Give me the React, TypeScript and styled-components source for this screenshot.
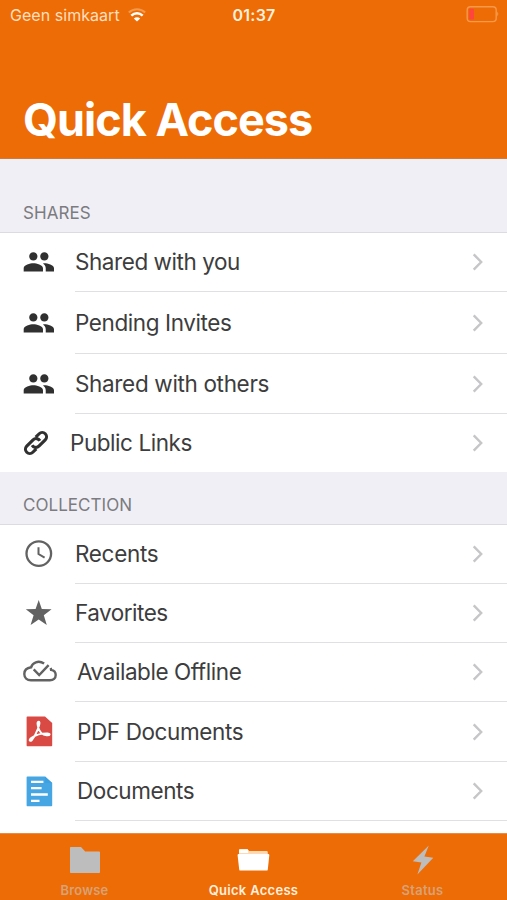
import React from 'react';
import styled, { createGlobalStyle } from 'styled-components';

const Global = createGlobalStyle`
  *{box-sizing:border-box}
  body{margin:0;background:#fff;font-family:Inter,"Liberation Sans",sans-serif;overflow:hidden}
  svg{display:block;flex:none}
`;
const Screen = styled.div`width:507px;height:900px;display:flex;flex-direction:column;overflow:hidden;`;
const Header = styled.header`height:159px;flex:none;background:#ee6c05;border-bottom:1px solid #d27a3c;display:flex;flex-direction:column;justify-content:space-between;`;
const StatusBar = styled.div`height:30px;display:grid;grid-template-columns:1fr auto 1fr;align-items:center;padding:0 8px 0 10px;color:#ffdfbf;font-size:16px;`;
const Carrier = styled.div`display:flex;align-items:center;gap:8px;letter-spacing:.04px;`;
const Clock = styled.div`font-weight:600;letter-spacing:.25px;color:#fff0dc;margin-left:-1px;`;
const Battery = styled.div`justify-self:end;padding-bottom:2px;`;
const Title = styled.h1`margin:0;padding:0 0 10px 23px;font-size:45px;line-height:56px;font-weight:700;color:#fff;letter-spacing:-1px;white-space:nowrap;`;
const SectionHeader = styled.div<{ $h: number }>`height:${p => p.$h}px;flex:none;background:#f0eff5;border-bottom:1px solid #dcdce0;display:flex;align-items:flex-end;padding:0 0 8px 23px;font-size:17px;line-height:22px;color:#7b7b80;letter-spacing:.05px;`;
const Row = styled.div<{ $h: number }>`height:${p => p.$h}px;flex:none;display:flex;background:#fff;padding-left:23px;`;
const IconCell = styled.div<{ $w: number }>`width:${p => p.$w}px;flex:none;display:flex;align-items:center;padding-bottom:1px;`;
const Body = styled.div<{ $line: boolean }>`flex:1;display:flex;align-items:center;justify-content:space-between;padding-right:24px;border-bottom:${p => (p.$line ? '1px solid #e0e0e2' : '0')};`;
const Label = styled.span<{ $ls: number; $indent: number }>`font-size:22.5px;line-height:30px;color:#3d3d3e;letter-spacing:${p => p.$ls}px;padding-left:${p => p.$indent}px;white-space:nowrap;`;
const Spacer = styled.div`flex:1;background:#fff;`;
const Tabs = styled.nav`height:67px;flex:none;background:#ee6c05;border-top:1px solid #e88a48;display:grid;grid-template-columns:repeat(3,1fr);`;
const Tab = styled.div`display:flex;flex-direction:column;align-items:center;`;
const TabIcon = styled.div`height:48px;display:flex;align-items:center;padding-top:3px;`;
const TabLabel = styled.span<{ $ls: number; $dim?: boolean }>`font-size:13px;line-height:17px;font-weight:600;letter-spacing:${p => p.$ls}px;color:${p => (p.$dim ? '#d7a275' : '#fff0df')};`;

const People = () => (
  <svg width="31" height="20" viewBox="0.5 4.8 22.5 14.5" fill="#303030"><path d="M16 11c1.66 0 2.99-1.34 2.99-3S17.66 5 16 5c-1.66 0-3 1.34-3 3s1.34 3 3 3zm-8 0c1.66 0 2.99-1.34 2.99-3S9.66 5 8 5C6.34 5 5 6.34 5 8s1.34 3 3 3zm0 2c-2.33 0-7 1.17-7 3.5V19h14v-2.5c0-2.33-4.67-3.5-7-3.5zm8 0c-.29 0-.62.02-.97.05 1.16.84 1.97 1.97 1.97 3.45V19h6v-2.5c0-2.33-4.67-3.5-7-3.5z" /></svg>
);
const linkHalf = 'M3.9-4.3H8.8A4.3 4.3 0 0 1 8.8 4.3H-.2A4.3 4.3 0 0 1-4.3-1.2';
const Link = () => (
  <svg width="26" height="26" viewBox="-13 -13 26 26" fill="none" stroke="#303030" strokeWidth="3.1">
    <g transform="rotate(-45)"><path d={linkHalf} /><path d={linkHalf} transform="rotate(180)" /></g>
  </svg>
);
const Recent = () => (
  <svg width="32" height="30" viewBox="0 0 32 30" fill="none" stroke="#626262" strokeWidth="2.3"><circle cx="15.8" cy="14.6" r="12.3" /><path d="M15.5 8.3V15L21.6 18.7" strokeWidth="2" /></svg>
);
const Star = () => (
  <svg width="32" height="30" viewBox="0 0 32 30" fill="#626262"><path d="M15.7 2.1l3.1 8.9 9.8.2-7.8 6.1 3 9.6-8.1-5.5-8.1 5.5 3-9.6-7.8-6.1 9.8-.2z" /></svg>
);
const Offline = () => (
  <svg width="34" height="24" viewBox="0 0 34 24" fill="none" stroke="#626262" strokeWidth="2.4"><path d="M21.1 3.6C15.2-.3 9.4 2.9 8.1 7.3 3.7 7.9 1.3 10.6 1.3 14c0 3.8 2.8 6.3 6.6 6.3h19c3.5 0 5.8-2.1 5.8-5.2 0-3.2-1.6-4.7-4.6-5.2-.1-.8-.2-1.3-.5-1.9M10.7 9.3l5.5 5.7L25.6 5.2" /></svg>
);
const Pdf = () => (
  <svg width="32" height="31" viewBox="0 0 32 31"><path d="M3.6 1.3q0-.8.8-.8H22l7.2 6.5v22.5q0 .8-.8.8h-24q-.8 0-.8-.8z" fill="#d94a45" /><path d="M15.8 5.8c-2 0-1.3 2.8-.4 6.2 1.3 4.4 5 6.9 8.2 7.2 3.9.3 3.8-1.8 1-1.8-5.9-.1-12 1.5-16 4.4-3.4 2.5-1.5 4.4.4 2C13.2 18.8 18.3 5.8 15.8 5.8z" fill="none" stroke="#fff" strokeWidth="1.9" /></svg>
);
const Doc = () => (
  <svg width="32" height="31" viewBox="0 0 32 31"><path d="M3.6 1.3q0-.8.8-.8H22l7.2 6.5v22.5q0 .8-.8.8h-24q-.8 0-.8-.8z" fill="#46a6e4" /><path d="M22 .5l7.2 6.5H23q-1 0-1-1z" fill="#3da0e0" /><path d="M8 5.9h12.4M8 12.2h10.6M8 18.5h16.8M8 24.8h8.5" stroke="#fff" strokeWidth="2.3" /></svg>
);
const Chevron = () => (
  <svg width="11" height="18" viewBox="0 0 11 18" fill="none" stroke="#c6c6c9" strokeWidth="2.4"><path d="M1.7 1.3L9.2 9l-7.5 7.7" /></svg>
);

type Item = { icon: React.ReactNode; text: string; h: number; ls: number; indent?: number; iconW?: number };
const shares: Item[] = [
  { icon: <People />, text: 'Shared with you', h: 59, ls: -0.44 },
  { icon: <People />, text: 'Pending Invites', h: 62, ls: -0.41 },
  { icon: <People />, text: 'Shared with others', h: 60, ls: -0.34 },
  { icon: <Link />, text: 'Public Links', h: 58, ls: -0.45, iconW: 47 },
];
const collection: Item[] = [
  { icon: <Recent />, text: 'Recents', h: 59, ls: -0.33 },
  { icon: <Star />, text: 'Favorites', h: 59, ls: -0.5 },
  { icon: <Offline />, text: 'Available Offline', h: 59, ls: -0.43, indent: 2 },
  { icon: <Pdf />, text: 'PDF Documents', h: 60, ls: -0.39, indent: 2 },
  { icon: <Doc />, text: 'Documents', h: 59, ls: -0.42, indent: 2 },
];
const List = ({ items, closed }: { items: Item[]; closed?: boolean }) => (
  <>
    {items.map((it, i) => (
      <Row key={it.text} $h={it.h}>
        <IconCell $w={it.iconW ?? 52}>{it.icon}</IconCell>
        <Body $line={!closed || i < items.length - 1}>
          <Label $ls={it.ls} $indent={it.indent ?? 0}>{it.text}</Label>
          <Chevron />
        </Body>
      </Row>
    ))}
  </>
);

export default function App() {
  return (
    <Screen>
      <Global />
      <Header>
        <StatusBar>
          <Carrier>
            Geen simkaart
            <svg width="18" height="14" viewBox="0 0 18 14" fill="none"><path d="M.8 4.6c4.7-4.4 11.7-4.4 16.4 0" stroke="#f39a4c" strokeWidth="2" /><path d="M3.3 7.6c3.3-3 8.1-3 11.4 0" stroke="#fff" strokeWidth="2.5" /><path d="M5.8 10.6c1.8-1.8 4.6-1.8 6.4 0L9 13.6z" fill="#fff" /></svg>
          </Carrier>
          <Clock>01:37</Clock>
          <Battery>
            <svg width="33" height="17" viewBox="0 0 33 17"><rect x="1.2" y=".8" width="29" height="14.8" rx="3.4" fill="none" stroke="#f5994b" strokeWidth="1.4" /><rect x="3.2" y="2.8" width="4.8" height="10.8" rx="1.2" fill="#ff453d" /><path d="M31.2 5.8q2.2 2.2 0 4.4z" fill="#f5994b" /></svg>
          </Battery>
        </StatusBar>
        <Title>Quick Access</Title>
      </Header>
      <SectionHeader $h={74}>SHARES</SectionHeader>
      <List items={shares} closed />
      <SectionHeader $h={53}>COLLECTION</SectionHeader>
      <List items={collection} />
      <Spacer />
      <Tabs>
        <Tab>
          <TabIcon><svg width="30" height="26" viewBox="0 0 30 26"><path d="M0 .8Q0 0 .8 0H11l4.2 4.4H29.2q.8 0 .8.8v20q0 .8-.8.8H.8q-.8 0-.8-.8z" fill="#bdbdbd" /></svg></TabIcon>
          <TabLabel $dim $ls={0.15}>Browse</TabLabel>
        </Tab>
        <Tab>
          <TabIcon><svg width="33" height="22" viewBox="0 0 33 22"><path d="M2 5V1.2Q2 .3 3 .3h7.5l1.5 1.8h17.5q1.3 0 1.3 1.3V6H2z" fill="#ffd9b5" /><path d="M2 4V1.2Q2 .3 3 .3h7.3q.8 0 .9.9V4z" fill="#fff" /><path d="M1.8 5h29.4q1.3 0 1.1 1.3l-1.5 14.1q-.1 1.2-1.3 1.2h-26q-1.2 0-1.3-1.2L.6 6.3Q.5 5 1.8 5z" fill="#fff" /></svg></TabIcon>
          <TabLabel $ls={0.3}>Quick Access</TabLabel>
        </Tab>
        <Tab>
          <TabIcon><svg width="22" height="30" viewBox="0 0 22 30"><path d="M16.8 0.6L12.4 11.6 21.3 12.8 5.4 29.4 9.4 17.6.8 16.2z" fill="#bdbdbd" /></svg></TabIcon>
          <TabLabel $dim $ls={0.3}>Status</TabLabel>
        </Tab>
      </Tabs>
    </Screen>
  );
}
